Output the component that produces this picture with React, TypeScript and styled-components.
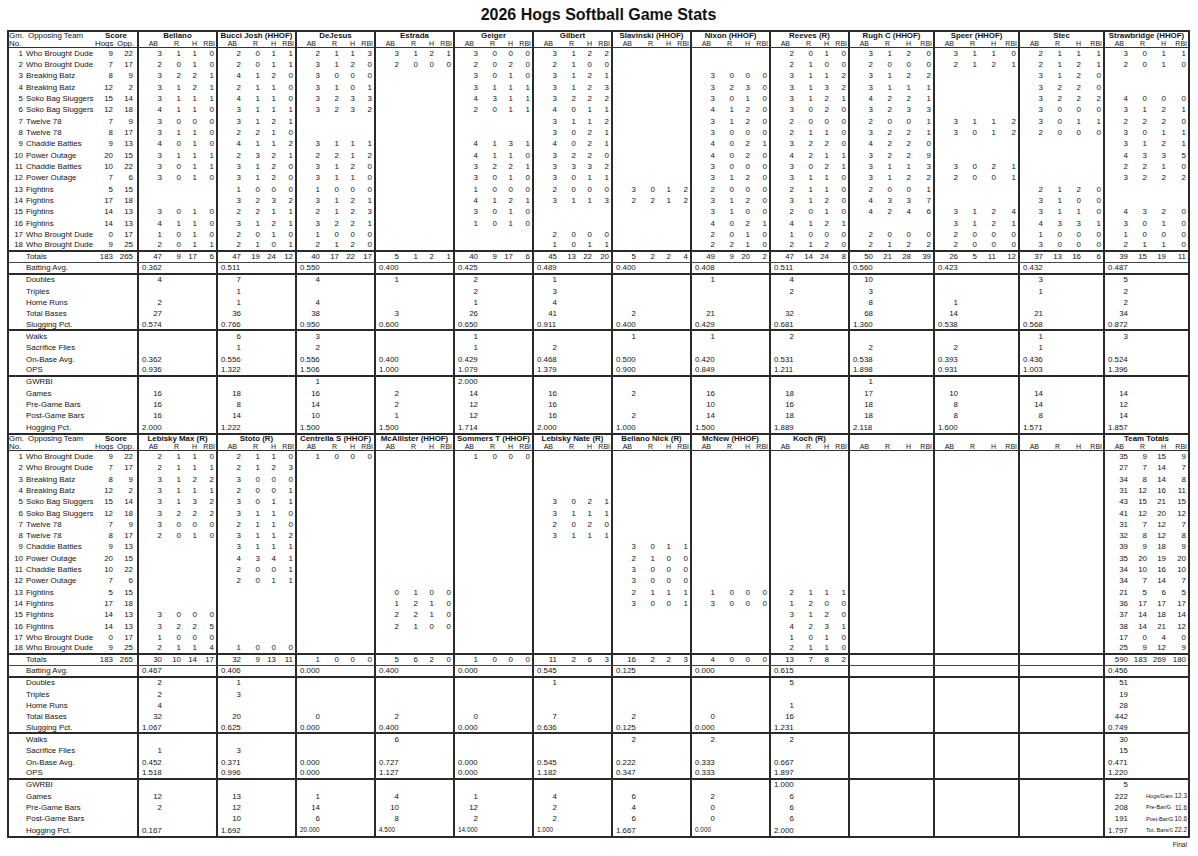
import React from 'react';
import styled, { createGlobalStyle } from 'styled-components';

type Player = {
  name: string;
  rows: string;
  total: string;
  stats: string;
  extras?: Record<number, [string, string]>;
};

const GAMES: [string, number, number][] = [
  ['Who Brought Dude', 9, 22],
  ['Who Brought Dude', 7, 17],
  ['Breaking Batz', 8, 9],
  ['Breaking Batz', 12, 2],
  ['Soko Bag Sluggers', 15, 14],
  ['Soko Bag Sluggers', 12, 18],
  ['Twelve 78', 7, 9],
  ['Twelve 78', 8, 17],
  ['Chaddie Batties', 9, 13],
  ['Power Outage', 20, 15],
  ['Chaddie Batties', 10, 22],
  ['Power Outage', 7, 6],
  ['Fightins', 5, 15],
  ['Fightins', 17, 18],
  ['Fightins', 14, 13],
  ['Fightins', 14, 13],
  ['Who Brought Dude', 0, 17],
  ['Who Brought Dude', 9, 25],
];

const STAT_LABELS = [
  'Batting Avg.', 'Doubles', 'Triples', 'Home Runs', 'Total Bases', 'Slugging Pct.',
  'Walks', 'Sacrifice Flies', 'On-Base Avg.', 'OPS',
  'GWRBI', 'Games', 'Pre-Game Bars', 'Post-Game Bars', 'Hogging Pct.',
];
const THICK_AFTER = [0, 5, 9];

// rows: "game=ABRHRBI" (single digits) or "game=AB.R.H.RBI"; stats separated by |, ~ = small print
const TOP: Player[] = [
  {
    name: 'Bellano',
    rows: '1=3110 2=2010 3=3221 4=3121 5=3111 6=4110 7=3000 8=3110 9=4010 10=3111 11=3011 12=3010 15=3010 16=4110 17=1010 18=2011',
    total: '47.9.17.6',
    stats: '0.362|4||2|27|0.574|||0.362|0.936||16|16|16|2.000',
  },
  {
    name: 'Bucci Josh (HHOF)',
    rows: '1=2011 2=2011 3=4120 4=2110 5=4110 6=3111 7=3121 8=2210 9=4112 10=2321 11=3120 12=3120 13=1000 14=3232 15=2211 16=3121 17=2010 18=2101',
    total: '47.19.24.12',
    stats: '0.511|7|1|1|36|0.766|6|1|0.556|1.322||18|8|14|1.222',
  },
  {
    name: 'DeJesus',
    rows: '1=2113 2=3120 3=3000 4=3101 5=3233 6=3232 9=3111 10=2212 11=3120 12=3110 13=1000 14=3121 15=2123 16=3221 17=1000 18=2120',
    total: '40.17.22.17',
    stats: '0.550|4||4|38|0.950|3|2|0.556|1.506|1|16|14|10|1.500',
  },
  {
    name: 'Estrada',
    rows: '1=3121 2=2000',
    total: '5.1.2.1',
    stats: '0.400|1|||3|0.600|||0.400|1.000||2|2|1|1.500',
  },
  {
    name: 'Geiger',
    rows: '1=3000 2=2020 3=3010 4=3111 5=4311 6=2011 9=4131 10=4110 11=3221 12=3010 13=1000 14=4121 15=3010 16=1010',
    total: '40.9.17.6',
    stats: '0.425|2|2|1|26|0.650|1|1|0.429|1.079|2.000|14|12|12|1.714',
  },
  {
    name: 'Gilbert',
    rows: '1=3122 2=2100 3=3121 4=3123 5=3222 6=4011 7=3112 8=3021 9=4021 10=3220 11=3332 12=3011 13=2000 14=3113 17=2000 18=1011',
    total: '45.13.22.20',
    stats: '0.489|1|3|4|41|0.911||2|0.468|1.379||16|16|16|2.000',
  },
  {
    name: 'Slavinski (HHOF)',
    rows: '13=3012 14=2212',
    total: '5.2.2.4',
    stats: '0.400||||2|0.400|1||0.500|0.900||2||2|1.000',
  },
  {
    name: 'Nixon (HHOF)',
    rows: '3=3000 4=3230 5=3010 6=4120 7=3120 8=3000 9=4021 10=4020 11=3000 12=3120 13=2000 14=3120 15=3100 16=4021 17=2010 18=2210',
    total: '49.9.20.2',
    stats: '0.408|1|||21|0.429|1||0.420|0.849||16|10|14|1.500',
  },
  {
    name: 'Reeves (R)',
    rows: '1=2010 2=2100 3=3112 4=3132 5=3121 6=3020 7=2000 8=2110 9=3220 10=4211 11=3021 12=3110 13=2110 14=3120 15=2010 16=4121 17=1000 18=2120',
    total: '47.14.24.8',
    stats: '0.511|4|2||32|0.681|2||0.531|1.211||18|16|18|1.889',
  },
  {
    name: 'Rugh C (HHOF)',
    rows: '1=3120 2=2000 3=3122 4=3111 5=4221 6=3233 7=2001 8=3221 9=4220 10=3229 11=3113 12=3122 13=2001 14=4337 15=4246 17=2000 18=2122',
    total: '50.21.28.39',
    stats: '0.560|10|3|8|68|1.360||2|0.538|1.898|1|17|18|18|2.118',
  },
  {
    name: 'Speer (HHOF)',
    rows: '1=3110 2=2121 7=3112 8=3012 11=3021 12=2001 15=3124 16=3121 17=2000 18=2000',
    total: '26.5.11.12',
    stats: '0.423|||1|14|0.538||2|0.393|0.931||10|8|8|1.600',
  },
  {
    name: 'Stec',
    rows: '1=2111 2=2121 3=3120 4=3220 5=3222 6=3000 7=3011 8=2000 13=2120 14=3100 15=3110 16=4331 17=1000 18=3000',
    total: '37.13.16.6',
    stats: '0.432|3|1||21|0.568|1|1|0.436|1.003||14|14|8|1.571',
  },
  {
    name: 'Strawbridge (HHOF)',
    rows: '1=3011 2=2010 5=4000 6=3121 7=2220 8=3011 9=3121 10=4335 11=2210 12=3222 15=4320 16=3010 17=1000 18=2110',
    total: '39.15.19.11',
    stats: '0.487|5|2|2|34|0.872|3||0.524|1.396||14|12|14|1.857',
  },
];

const EMPTY: Player = { name: '', rows: '', total: '', stats: '' };

const BOTTOM: Player[] = [
  {
    name: 'Lebisky Max (R)',
    rows: '1=2110 2=2111 3=3122 4=3111 5=3132 6=3222 7=3000 8=2010 15=3000 16=3225 17=1000 18=2114',
    total: '30.10.14.17',
    stats: '0.467|2|2|4|32|1.067||1|0.452|1.518||12|2||0.167',
  },
  {
    name: 'Stoto (R)',
    rows: '1=2110 2=2123 3=3000 4=2001 5=3011 6=3110 7=2110 8=3112 9=3111 10=4341 11=2001 12=2011 18=1000',
    total: '32.9.13.11',
    stats: '0.406|1|3||20|0.625||3|0.371|0.996||13|12|10|1.692',
  },
  {
    name: 'Centrella S (HHOF)',
    rows: '1=1000',
    total: '1.0.0.0',
    stats: '0.000||||0|0.000|||0.000|0.000||1|14|6|~20.000',
  },
  {
    name: 'McAllister (HHOF)',
    rows: '13=0100 14=1210 15=2210 16=2100',
    total: '5.6.2.0',
    stats: '0.400||||2|0.400|6||0.727|1.127||4|10|8|~4.500',
  },
  {
    name: 'Sommers T (HHOF)',
    rows: '1=1000',
    total: '1.0.0.0',
    stats: '0.000||||0|0.000|||0.000|0.000||1|12|2|~14.000',
  },
  {
    name: 'Lebisky Nate (R)',
    rows: '5=3021 6=3111 7=2020 8=3111',
    total: '11.2.6.3',
    stats: '0.545|1|||7|0.636|||0.545|1.182||4|2|2|~1.000',
  },
  {
    name: 'Bellano Nick (R)',
    rows: '9=3011 10=2100 11=3000 12=3000 13=2111 14=3001',
    total: '16.2.2.3',
    stats: '0.125||||2|0.125|2||0.222|0.347||6|4|6|1.667',
  },
  {
    name: 'McNew (HHOF)',
    rows: '13=1000 14=3000',
    total: '4.0.0.0',
    stats: '0.000||||0|0.000|2||0.333|0.333||2|0|0|~0.000',
  },
  {
    name: 'Koch (R)',
    rows: '13=2111 14=1200 15=3120 16=4231 17=1010 18=2110',
    total: '13.7.8.2',
    stats: '0.615|5||1|16|1.231|2||0.667|1.897|1.000|6|6|6|2.000',
  },
  EMPTY,
  EMPTY,
  EMPTY,
  {
    name: 'Team Totals',
    rows:
      '1=35.9.15.9 2=27.7.14.7 3=34.8.14.8 4=31.12.16.11 5=43.15.21.15 6=41.12.20.12 7=31.7.12.7 8=32.8.12.8 9=39.9.18.9 ' +
      '10=35.20.19.20 11=34.10.16.10 12=34.7.14.7 13=21.5.6.5 14=36.17.17.17 15=37.14.18.14 16=38.14.21.12 17=17.0.4.0 18=25.9.12.9',
    total: '590.183.269.180',
    stats: '0.456|51|19|28|442|0.749|30|15|0.471|1.220|5|222|208|191|1.797',
    extras: {
      11: ['Hogs/Game', '12.3'],
      12: ['Pre-Bar/G', '11.6'],
      13: ['Post-Bar/G', '10.6'],
      14: ['Tot. Bars/G', '22.2'],
    },
  },
];

const parseRows = (s: string) => {
  const map: Record<number, string[]> = {};
  s.split(' ').filter(Boolean).forEach((token) => {
    const [n, v] = token.split('=');
    map[Number(n)] = v.includes('.') ? v.split('.') : v.split('');
  });
  return map;
};

const LINE = '#2a2a2a';
const COLS = '128px repeat(9, 79px) repeat(4, 85px)';

const GlobalStyle = createGlobalStyle`
  html, body {
    margin: 0;
    padding: 0;
    background: #ffffff;
  }
  body {
    font-family: "Liberation Sans", Arial, sans-serif;
    font-size: 7.9px;
    color: #141414;
  }
`;

const Sheet = styled.div`
  width: 1198px;
  height: 856px;
  box-sizing: border-box;
  padding-left: 7px;
  overflow: hidden;
`;

const Title = styled.h1`
  margin: 0;
  width: 1183px;
  height: 30px;
  line-height: 30px;
  text-align: center;
  font-size: 16px;
  font-weight: 700;
  color: #111;
`;

const Table = styled.div<{ $top?: boolean }>`
  width: 1183px;
  box-sizing: border-box;
  border: 2px solid ${LINE};
  border-top-width: ${(p) => (p.$top ? '2px' : '0')};
`;

const Row = styled.div<{ $rule?: 'thin' | 'thick' }>`
  display: grid;
  grid-template-columns: ${COLS};
  height: 11.33px;
  box-sizing: border-box;
  border-bottom: ${(p) =>
    p.$rule === 'thick' ? `2px solid ${LINE}` : p.$rule === 'thin' ? '1px solid #444' : '0'};
`;

const HeadRow = styled.div`
  display: grid;
  grid-template-columns: ${COLS};
  height: 16px;
  box-sizing: border-box;
  border-bottom: 1px solid #333;
`;

const LabelHead = styled.div`
  display: grid;
  grid-template-columns: 19px 67px 22px 20px;
  grid-template-rows: 8px 7px;
  align-items: center;
  line-height: 1;
`;

const HeadText = styled.span<{ $span?: string; $right?: boolean; $bold?: boolean }>`
  grid-column: ${(p) => p.$span || 'auto'};
  text-align: ${(p) => (p.$bold ? 'center' : p.$right ? 'right' : 'left')};
  padding-right: ${(p) => (p.$right ? '4px' : '0')};
  font-weight: ${(p) => (p.$bold ? 700 : 400)};
  white-space: nowrap;
`;

const LabelCell = styled.div`
  display: grid;
  grid-template-columns: 14px 72px 22px 20px;
  align-items: center;
  line-height: 1;
`;

const GmNo = styled.span`
  text-align: right;
`;

const Team = styled.span`
  padding-left: 3px;
  white-space: nowrap;
`;

const Score = styled.span`
  text-align: right;
  padding-right: 4px;
`;

const Block = styled.div<{ $wide?: boolean }>`
  box-sizing: border-box;
  min-width: 0;
  border-left: 2px solid ${LINE};
  display: grid;
  grid-template-columns: ${(p) => (p.$wide ? '25px 19px 19px 1fr' : '25px 19px 16px 1fr')};
  align-items: center;
  line-height: 1;
`;

const HeadBlock = styled(Block)`
  grid-template-rows: 8px 7px;
`;

const PlayerName = styled.span`
  grid-column: 1 / -1;
  text-align: center;
  font-weight: 700;
  white-space: nowrap;
`;

const SubLabel = styled.span<{ $pad: number }>`
  text-align: right;
  padding-right: ${(p) => p.$pad}px;
  font-size: 7px;
`;

const Val = styled.span`
  text-align: right;
  padding-right: 2px;
`;

const StatDec = styled.span<{ $small?: boolean }>`
  padding-left: 3px;
  white-space: nowrap;
  font-size: ${(p) => (p.$small ? '6.4px' : 'inherit')};
`;

const Extra = styled.span`
  grid-column: 2 / 5;
  display: flex;
  align-items: center;
  padding-left: 16px;
`;

const ExtraLabel = styled.span`
  width: 27px;
  overflow: hidden;
  white-space: nowrap;
  font-size: 5.6px;
`;

const ExtraValue = styled.span`
  flex: 1;
  text-align: right;
  padding-right: 1px;
  font-size: 6.4px;
`;

const Final = styled.div`
  width: 1183px;
  box-sizing: border-box;
  padding: 3px 3px 0 0;
  text-align: right;
  font-size: 6.6px;
`;

const SUBS: [string, number][] = [['AB', 6], ['R', 4], ['H', 2], ['RBI', 1]];

function StatValue({ value }: { value: string }) {
  if (!value) return <span />;
  const small = value.startsWith('~');
  const text = small ? value.slice(1) : value;
  if (text.includes('.')) return <StatDec $small={small}>{text}</StatDec>;
  return <Val>{text}</Val>;
}

function StatTable({ players, top }: { players: Player[]; top?: boolean }) {
  const parsed = players.map((p) => ({
    ...p,
    games: parseRows(p.rows),
    totals: p.total ? p.total.split('.') : [],
    values: p.stats ? p.stats.split('|') : [],
  }));
  const hogs = GAMES.reduce((a, g) => a + g[1], 0);
  const opp = GAMES.reduce((a, g) => a + g[2], 0);

  return (
    <Table $top={top}>
      <HeadRow>
        <LabelHead>
          <HeadText>Gm.</HeadText>
          <HeadText>Opposing Team</HeadText>
          <HeadText $span="3 / 5" $bold>
            Score
          </HeadText>
          <HeadText>No.</HeadText>
          <span />
          <HeadText $right>Hogs</HeadText>
          <HeadText $right>Opp.</HeadText>
        </LabelHead>
        {parsed.map((p, i) => (
          <HeadBlock key={i} $wide={i >= 9}>
            <PlayerName>{p.name}</PlayerName>
            {SUBS.map(([s, pad]) => (
              <SubLabel key={s} $pad={pad}>
                {s}
              </SubLabel>
            ))}
          </HeadBlock>
        ))}
      </HeadRow>

      {GAMES.map(([team, h, o], r) => (
        <Row key={r} $rule={r === 17 ? 'thick' : undefined}>
          <LabelCell>
            <GmNo>{r + 1}</GmNo>
            <Team>{team}</Team>
            <Score>{h}</Score>
            <Score>{o}</Score>
          </LabelCell>
          {parsed.map((p, i) => (
            <Block key={i} $wide={i >= 9}>
              {(p.games[r + 1] || []).map((v, j) => (
                <Val key={j}>{v}</Val>
              ))}
            </Block>
          ))}
        </Row>
      ))}

      <Row $rule="thin">
        <LabelCell>
          <span />
          <Team>Totals</Team>
          <Score>{hogs}</Score>
          <Score>{opp}</Score>
        </LabelCell>
        {parsed.map((p, i) => (
          <Block key={i} $wide={i >= 9}>
            {p.totals.map((v, j) => (
              <Val key={j}>{v}</Val>
            ))}
          </Block>
        ))}
      </Row>

      {STAT_LABELS.map((label, s) => (
        <Row key={label} $rule={THICK_AFTER.includes(s) ? 'thick' : undefined}>
          <LabelCell>
            <span />
            <Team>{label}</Team>
          </LabelCell>
          {parsed.map((p, i) => {
            const extra = p.extras?.[s];
            return (
              <Block key={i} $wide={i >= 9}>
                <StatValue value={p.values[s] || ''} />
                {extra && (
                  <Extra>
                    <ExtraLabel>{extra[0]}</ExtraLabel>
                    <ExtraValue>{extra[1]}</ExtraValue>
                  </Extra>
                )}
              </Block>
            );
          })}
        </Row>
      ))}
    </Table>
  );
}

export default function App() {
  return (
    <Sheet>
      <GlobalStyle />
      <Title>2026 Hogs Softball Game Stats</Title>
      <StatTable players={TOP} top />
      <StatTable players={BOTTOM} />
      <Final>Final</Final>
    </Sheet>
  );
}
